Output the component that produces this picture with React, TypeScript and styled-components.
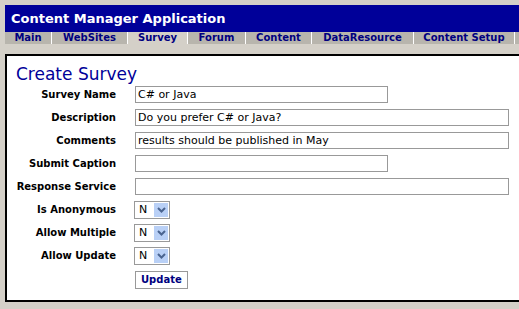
import styled, { createGlobalStyle } from "styled-components";

const GlobalStyle = createGlobalStyle`
	html, body {
		margin: 0;
		padding: 0;
		background: #d4d0c8;
		overflow: hidden;
	}
	body {
		padding: 5px 0 0 5px;
		font-family: "DejaVu Sans", Verdana, sans-serif;
	}
`;

const Page = styled.div`
	width: 514px;
`;

const Header = styled.div`
	background: #000099;
	color: #ffffff;
	font-weight: bold;
	font-size: 13px;
	height: 27px;
	line-height: 27px;
	padding-left: 6px;
`;

const TabBar = styled.div`
	display: flex;
	background: #b8b5ad;
	height: 12px;
	overflow: hidden;
`;

const Tab = styled.div<{ $width: number; $active?: boolean }>`
	width: ${(props) => props.$width}px;
	flex: none;
	border-right: 1px solid #ffffff;
	background: ${(props) => (props.$active ? "#d4d0c8" : "#b8b5ad")};
	color: #000080;
	font-weight: bold;
	font-size: 10px;
	line-height: 12px;
	text-align: center;
	white-space: nowrap;
`;

const Panel = styled.div`
	margin-top: 10px;
	background: #ffffff;
	border-top: 2px solid #000000;
	border-left: 2px solid #000000;
	border-bottom: 2px solid #000000;
	height: 248px;
	box-sizing: border-box;
`;

const Title = styled.div`
	color: #000099;
	font-size: 17px;
	padding: 8px 0 0 9px;
	line-height: 20px;
`;

const Form = styled.div`
	display: grid;
	grid-template-columns: 109px auto;
	column-gap: 19px;
	margin-top: -1px;
`;

const Label = styled.div`
	font-weight: bold;
	font-size: 10px;
	text-align: right;
	height: 23px;
	line-height: 23px;
	white-space: nowrap;
`;

const Field = styled.div`
	height: 23px;
	display: flex;
	align-items: center;
`;

const TextInput = styled.input<{ $wide?: boolean }>`
	width: ${(props) => (props.$wide ? 374 : 253)}px;
	height: 17px;
	box-sizing: border-box;
	border: 1px solid #999999;
	padding: 0 2px;
	font-family: "DejaVu Sans", Tahoma, sans-serif;
	font-size: 11px;
	color: #000000;
	outline: none;
`;

const SelectBox = styled.div`
	display: flex;
	align-items: center;
	width: 36px;
	height: 18px;
	box-sizing: border-box;
	border: 1px solid #999999;
	margin-left: -1px;
	padding: 1px;
	background: #ffffff;
`;

const SelectValue = styled.select`
	appearance: none;
	border: none;
	background: transparent;
	width: 18px;
	padding: 0 0 0 3px;
	font-family: "DejaVu Sans", Tahoma, sans-serif;
	font-size: 11px;
	color: #000000;
	outline: none;
`;

const SelectArrow = styled.span`
	display: flex;
	align-items: center;
	justify-content: center;
	width: 14px;
	height: 14px;
	background: #b9d0f6;
`;

const Button = styled.button`
	margin-top: 2px;
	height: 18px;
	padding: 0 5px;
	border: 1px solid #999999;
	background: #ffffff;
	color: #000080;
	font-family: "DejaVu Sans", Verdana, sans-serif;
	font-weight: bold;
	font-size: 10px;
`;

const tabs = [
	{ name: "Main", width: 46 },
	{ name: "WebSites", width: 75 },
	{ name: "Survey", width: 59, active: true },
	{ name: "Forum", width: 57 },
	{ name: "Content", width: 65 },
	{ name: "DataResource", width: 101 },
	{ name: "Content Setup", width: 100 },
];

function YesNo() {
	return (
		<SelectBox>
			<SelectValue defaultValue="N">
				<option value="N">N</option>
				<option value="Y">Y</option>
			</SelectValue>
			<SelectArrow>
				<svg width="9" height="6" viewBox="0 0 9 6">
					<path d="M1 1 L4.5 4.5 L8 1" fill="none" stroke="#4a6490" strokeWidth="2" />
				</svg>
			</SelectArrow>
		</SelectBox>
	);
}

export default function App() {
	return (
		<Page>
			<GlobalStyle />
			<Header>Content Manager Application</Header>
			<TabBar>
				{tabs.map((t) => (
					<Tab key={t.name} $width={t.width} $active={t.active}>{t.name}</Tab>
				))}
			</TabBar>
			<Panel>
				<Title>Create Survey</Title>
				<Form>
					<Label>Survey Name</Label>
					<Field><TextInput defaultValue="C# or Java" /></Field>

					<Label>Description</Label>
					<Field><TextInput $wide defaultValue="Do you prefer C# or Java?" /></Field>

					<Label>Comments</Label>
					<Field><TextInput $wide defaultValue="results should be published in May" /></Field>

					<Label>Submit Caption</Label>
					<Field><TextInput /></Field>

					<Label>Response Service</Label>
					<Field><TextInput $wide /></Field>

					<Label>Is Anonymous</Label>
					<Field><YesNo /></Field>

					<Label>Allow Multiple</Label>
					<Field><YesNo /></Field>

					<Label>Allow Update</Label>
					<Field><YesNo /></Field>

					<div />
					<Field><Button>Update</Button></Field>
				</Form>
			</Panel>
		</Page>
	);
}
